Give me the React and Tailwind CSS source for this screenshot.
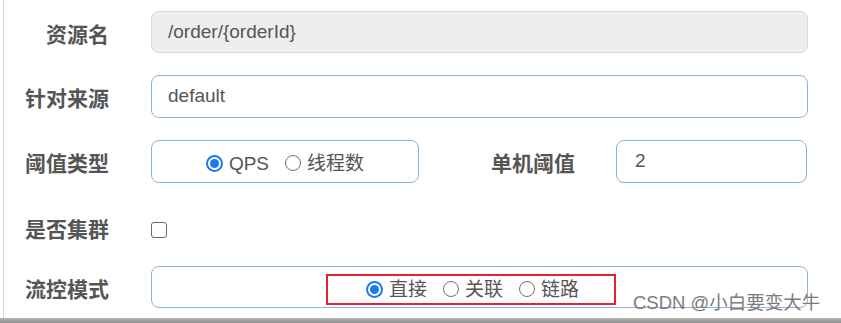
import React from 'react';

const font = { fontFamily: '"Liberation Sans", "Noto Sans CJK SC", sans-serif' };

const Label = ({ children, className = '' }) => (
    <div className={`w-[105px] shrink-0 text-right text-[21px] font-bold text-[#555] ${className}`}>
        {children}
    </div>
);

const Radio = ({ checked, label }) => (
    <span className="inline-flex items-center gap-[6px]">
        {checked ? (
            <span className="w-[17px] h-[17px] rounded-full border-[2px] border-[#1a7bf0] flex items-center justify-center">
                <span className="w-[9px] h-[9px] rounded-full bg-[#1a7bf0]"></span>
            </span>
        ) : (
            <span className="w-[16px] h-[16px] rounded-full border-[1.5px] border-[#707070] bg-white"></span>
        )}
        <span className="text-[19px] text-[#555] leading-none">{label}</span>
    </span>
);

const App = () => {
    return (
        <div className="relative w-[841px] h-[323px] bg-white overflow-hidden" style={font}>
            <div className="ml-[3px] h-[318px] border-l-[1.5px] border-[#d6d6d6] pt-[11px]">
                {/* 资源名 */}
                <div className="flex items-center">
                    <Label className="mt-[5px]">资源名</Label>
                    <div className="ml-[42px] w-[657px] h-[42px] rounded-[8px] border border-[#d8d8d8] bg-[#eeeeee] flex items-center px-[16px] text-[19px] text-[#555]">
                        /order/{'{'}orderId{'}'}
                    </div>
                </div>

                {/* 针对来源 */}
                <div className="flex items-center mt-[22px]">
                    <Label className="mt-[5px]">针对来源</Label>
                    <div className="ml-[42px] w-[657px] h-[43px] rounded-[8px] border-[1.5px] border-[#8cb2df] bg-white flex items-center px-[16px] text-[19px] text-[#555]">
                        default
                    </div>
                </div>

                {/* 阈值类型 / 单机阈值 */}
                <div className="flex items-center mt-[22px]">
                    <Label className="mt-[5px]">阈值类型</Label>
                    <div className="ml-[42px] w-[268px] h-[43px] rounded-[8px] border-[1.5px] border-[#8cb2df] bg-white flex items-center justify-center gap-[16px] pt-[3px]">
                        <Radio checked label="QPS" />
                        <Radio label="线程数" />
                    </div>
                    <div className="w-[156px] shrink-0 text-right text-[21px] font-bold text-[#555] mt-[5px]">单机阈值</div>
                    <div className="ml-[41px] w-[191px] h-[43px] rounded-[8px] border-[1.5px] border-[#8cb2df] bg-white flex items-center px-[18px] text-[19px] text-[#555]">
                        2
                    </div>
                </div>

                {/* 是否集群 */}
                <div className="flex items-center mt-[32px] h-[30px]">
                    <Label>是否集群</Label>
                    <div className="ml-[42px] w-[16px] h-[16px] rounded-[3px] border-[1.5px] border-[#666] bg-white"></div>
                </div>

                {/* 流控模式 */}
                <div className="flex items-center mt-[21px]">
                    <Label className="mt-[5px]">流控模式</Label>
                    <div className="relative ml-[42px] w-[657px] h-[42px] rounded-[8px] border-[1.5px] border-[#8cb2df] bg-white flex items-center justify-center gap-[16px] pt-[4px] pr-[14px]">
                        <Radio checked label="直接" />
                        <Radio label="关联" />
                        <Radio label="链路" />
                        <div className="absolute left-[174px] top-[7px] w-[290px] h-[31px] border-2 border-[#e8212b]"></div>
                    </div>
                </div>
            </div>
            <div className="h-[5px] bg-gradient-to-b from-[#b4b4b4] to-[#909090]"></div>

            {/* watermark */}
            <div className="absolute left-[633px] top-[292px] text-[18.5px] text-[#7c7c7c] leading-[22px] whitespace-nowrap">
                CSDN @小白要变大牛
            </div>
        </div>
    );
};

export default App;
